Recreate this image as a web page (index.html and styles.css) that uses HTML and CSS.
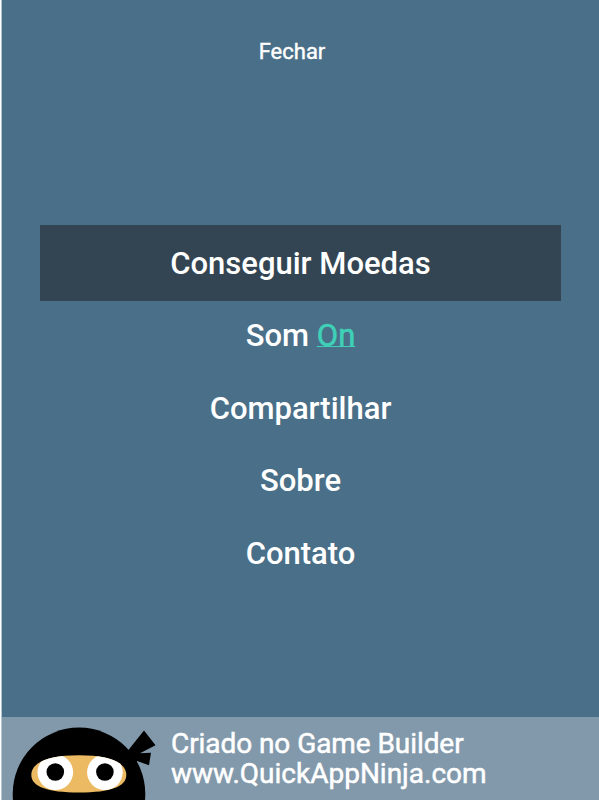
FILE: index.html
```html
<!DOCTYPE html>
<html lang="pt-BR">
  <head>
    <meta charset="UTF-8" />
    <meta name="viewport" content="width=device-width, initial-scale=1.0" />
    <title>Menu</title>
    <link rel="stylesheet" href="styles.css">
  </head>
  <body>
    <div class="screen">
      <!-- Close -->
      <div class="header">
        <a class="close">Fechar</a>
      </div>

      <!-- Menu -->
      <nav class="menu">
        <a class="menu-item active">Conseguir Moedas</a>
        <a class="menu-item">Som <span class="toggle">On</span></a>
        <a class="menu-item">Compartilhar</a>
        <a class="menu-item">Sobre</a>
        <a class="menu-item">Contato</a>
      </nav>

      <!-- Banner -->
      <div class="banner">
        <svg class="ninja" width="160" height="83" viewBox="0 0 160 83">
          <defs>
            <clipPath id="face">
              <path d="M30.3 58C30.3 46 46 38.3 78 38.3C110 38.3 125.3 46 125.3 58C125.3 69.5 110 75.5 78 75.5C46 75.5 30.3 69.5 30.3 58Z" />
            </clipPath>
          </defs>
          <circle cx="78" cy="76.9" r="66.3" />
          <path d="M125 36L143 13.6L154.5 28.3L139 36.3L150 35.8L148 48.2L136 44L134 48Z" />
          <g clip-path="url(#face)">
            <rect x="30" y="38" width="96" height="38" fill="#ebba62" />
            <circle cx="54.3" cy="55.3" r="17.8" fill="#fff" />
            <circle cx="103.9" cy="55.3" r="17.8" fill="#fff" />
            <circle cx="54.3" cy="55" r="8.8" />
            <circle cx="103.9" cy="55" r="8.8" />
          </g>
        </svg>
        <div class="banner-text">
          <p class="banner-title">Criado no Game Builder</p>
          <p>www.QuickAppNinja.com</p>
        </div>
      </div>
    </div>
  </body>
</html>
```
FILE: styles.css
```css
* {
  margin: 0;
  padding: 0;
  box-sizing: border-box;
}

body {
  font-family: Roboto, sans-serif;
  background: #fff;
  color: #fff;
}

.screen {
  display: flex;
  flex-direction: column;
  height: 800px;
  margin-left: 1px;
  border-left: 1px solid #b4c6d0;
  background: #4a6f88;
}

.header {
  height: 225px;
  padding: 39px 17px 0 0;
  text-align: center;
}

.close {
  font-size: 22px;
  line-height: 26px;
  -webkit-text-stroke: 0.4px #fff;
}

.menu {
  display: flex;
  flex-direction: column;
  flex: 1;
  padding: 0 38px;
}

.menu-item {
  height: 72.7px;
  font-size: 31px;
  font-weight: 500;
  line-height: 70px;
  text-align: center;
}

.menu-item.active {
  height: 76px;
  line-height: 78px;
  background: #334552;
}

.toggle {
  color: #3fd0b8;
  font-weight: 400;
  text-decoration: underline 1px;
  text-underline-offset: 0;
  text-decoration-skip-ink: none;
  -webkit-text-stroke: 0.6px currentColor;
}

.banner {
  display: flex;
  height: 83px;
  background: #8299ab;
}

.ninja {
  margin-left: -1px;
}

.banner-text {
  padding: 12px 0 0 10px;
  font-size: 28px;
  line-height: 30px;
  -webkit-text-stroke: 0.5px #fff;
}

.banner-title {
  letter-spacing: -0.07px;
}
```
